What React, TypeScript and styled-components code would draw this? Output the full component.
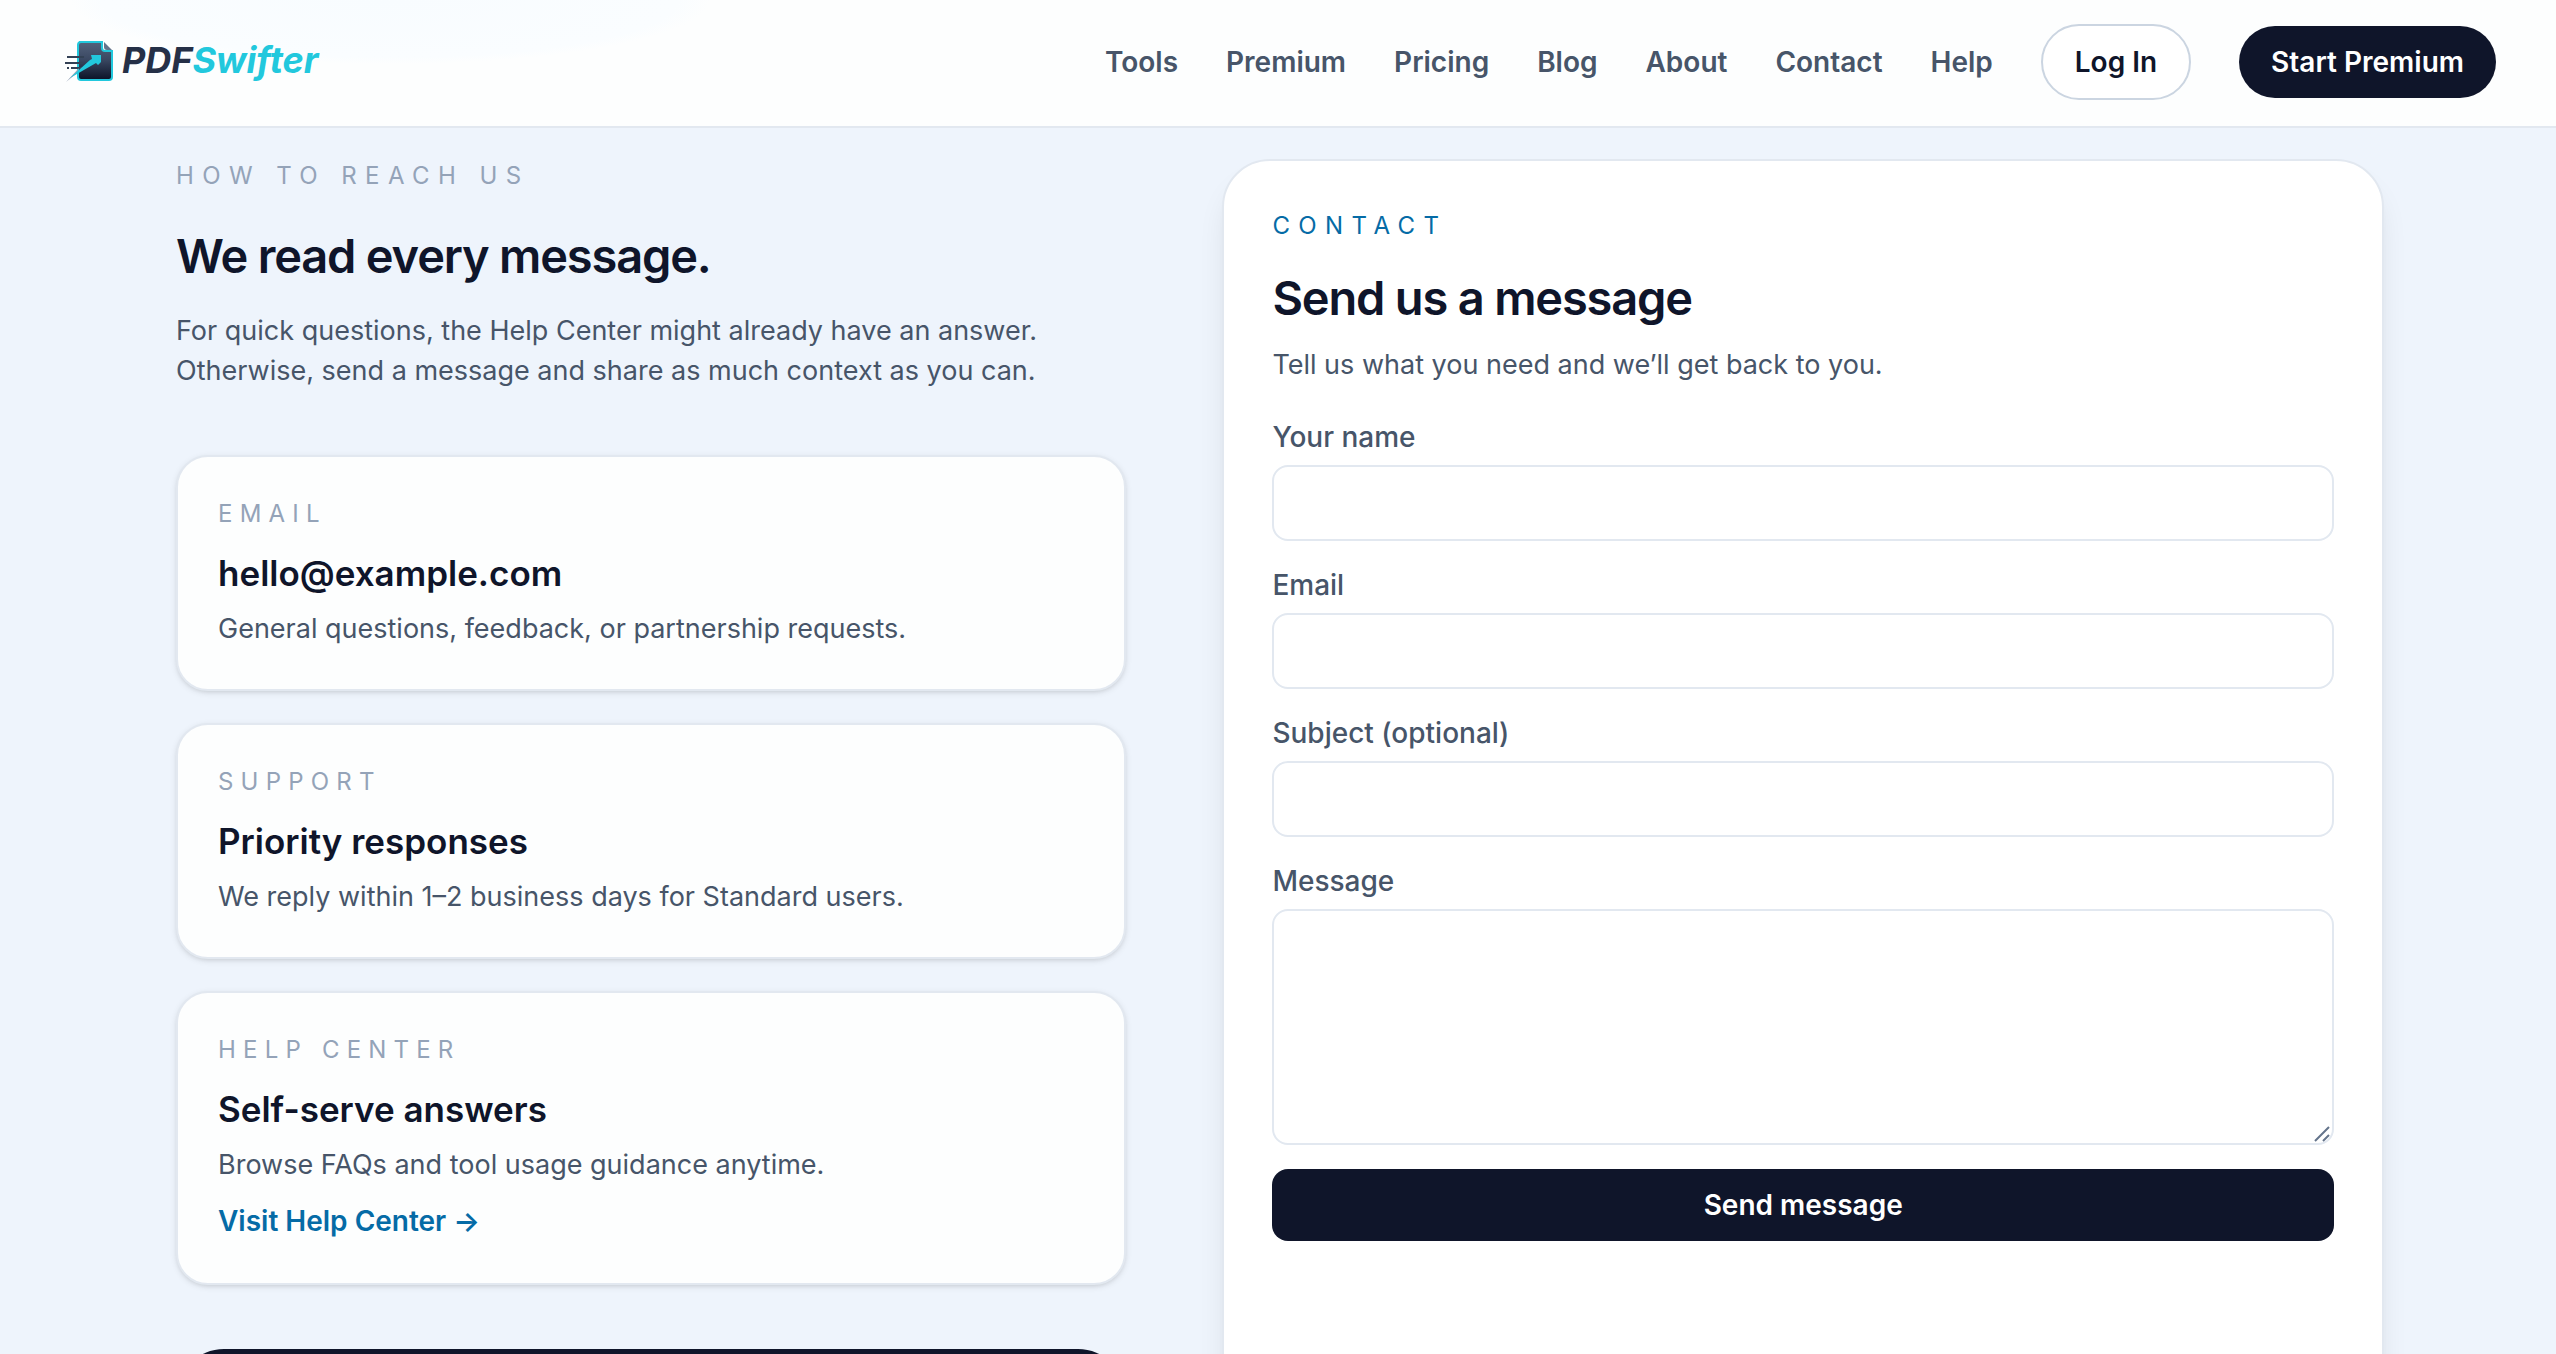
import React from "react";
import styled, { createGlobalStyle } from "styled-components";

const ink = "#0f152a";
const slate = "#475569";
const mist = "#94a3b8";
const line = "#e2e8f0";
const sky = "#056ba6";

const GlobalStyle = createGlobalStyle`
  *, *::before, *::after { box-sizing: border-box; }
  body {
    margin: 0;
    background: #eef4fc;
    color: ${ink};
    font-family: Inter, "Liberation Sans", sans-serif;
    font-size: 28px;
    line-height: 40px;
    -webkit-font-smoothing: antialiased;
  }
  h1, h2, h3, p { margin: 0; }
  a { color: inherit; text-decoration: none; }
  button, input, textarea { font: inherit; color: inherit; }
`;

const Shell = styled.div`
  height: 100vh;
  overflow: hidden;
`;

const Header = styled.header`
  display: flex;
  align-items: center;
  justify-content: space-between;
  height: 128px;
  padding: 0 60px 2px 64px;
  background: radial-gradient(320px 64px at 390px 0, #f8fcff 0%, #fafdff 90%, #fdfefe 100%) #fdfefe;
  border-bottom: 2px solid ${line};
`;

const Brand = styled.a`
  display: flex;
  align-items: center;
  gap: 8px;
  padding-bottom: 4px;
  font-size: 36px;
  font-weight: 700;
  font-style: italic;
  color: #253047;
`;

const BrandAccent = styled.span`
  color: #22c8dd;
`;

const Nav = styled.nav`
  display: flex;
  align-items: center;
  gap: 48px;
  font-weight: 600;
  color: ${slate};
`;

const PillButton = styled.button<{ $solid?: boolean }>`
  padding: 16px 32px;
  border-radius: 38px;
  border: ${(p) => (p.$solid ? "0" : "2px solid #cbd5e1")};
  background: ${(p) => (p.$solid ? ink : "#ffffff")};
  color: ${(p) => (p.$solid ? "#ffffff" : ink)};
  font-weight: 600;
`;

const Main = styled.main`
  padding: 31px 0 0 4px;
`;

const Columns = styled.div`
  display: grid;
  grid-template-columns: 9fr 11fr;
  gap: 96px;
  max-width: 2304px;
  margin: 0 auto;
  padding: 0 48px;
`;

const Intro = styled.section`
  display: flex;
  flex-direction: column;
`;

const Kicker = styled.p<{ $tone?: string; $tracking?: string }>`
  padding-top: 2px;
  font-size: 24px;
  line-height: 30px;
  letter-spacing: ${(p) => p.$tracking ?? "0.35em"};
  text-transform: uppercase;
  color: ${(p) => p.$tone ?? mist};
`;

const Title = styled.h2<{ $gap: number }>`
  margin-top: ${(p) => p.$gap}px;
  padding-top: 2px;
  font-size: 47px;
  line-height: 62px;
  font-weight: 600;
  letter-spacing: -0.025em;
`;

const Lead = styled.p<{ $gap: number }>`
  margin-top: ${(p) => p.$gap}px;
  font-size: 27px;
  color: ${slate};
`;

const CardList = styled.div`
  display: flex;
  flex-direction: column;
  gap: 32px;
  margin-top: 64px;
`;

const InfoCard = styled.article`
  padding: 40px;
  border: 2px solid ${line};
  border-radius: 32px;
  background: #fdfefe;
  box-shadow: 0 2px 6px rgba(0, 0, 0, 0.1), 0 2px 4px -2px rgba(0, 0, 0, 0.1);
`;

const CardTitle = styled.h3`
  margin-top: 16px;
  font-size: 35px;
  line-height: 56px;
  font-weight: 600;
`;

const HelpLink = styled.a`
  display: block;
  margin-top: 14px;
  line-height: 44px;
  font-weight: 600;
  color: ${sky};
`;

const DarkPanel = styled.div`
  min-height: 320px;
  margin-top: 64px;
  border-radius: 48px;
  background: ${ink};
`;

const FormCard = styled.section`
  padding: 48px;
  border: 2px solid ${line};
  border-radius: 48px;
  background: #ffffff;
  box-shadow: 0 20px 30px -6px rgba(0, 0, 0, 0.1), 0 8px 12px -8px rgba(0, 0, 0, 0.1);
`;

const Form = styled.form`
  display: flex;
  flex-direction: column;
  gap: 24px;
  margin-top: 32px;
`;

const Field = styled.div`
  display: flex;
  flex-direction: column;
  gap: 8px;
`;

const Label = styled.label`
  font-weight: 500;
  color: ${slate};
`;

const Input = styled.input`
  width: 100%;
  height: 76px;
  padding: 16px 24px;
  border: 2px solid ${line};
  border-radius: 16px;
  background: #ffffff;
  outline: none;
`;

const AreaWrap = styled.div`
  position: relative;
  display: flex;
`;

const TextArea = styled.textarea`
  width: 100%;
  height: 236px;
  padding: 16px 24px;
  border: 2px solid ${line};
  border-radius: 16px;
  background: #ffffff;
  outline: none;
  resize: none;
`;

const Grip = styled.svg`
  position: absolute;
  right: 4px;
  bottom: 3px;
`;

const Submit = styled.button`
  height: 72px;
  border: 0;
  border-radius: 16px;
  background: ${ink};
  color: #ffffff;
  font-weight: 600;
`;

const links = ["Tools", "Premium", "Pricing", "Blog", "About", "Contact", "Help"];

function LogoMark() {
  return (
    <svg width="50" height="44" viewBox="0 0 50 44" aria-hidden="true">
      <defs>
        <linearGradient id="sheet" x1="0" y1="0" x2="0" y2="1">
          <stop offset="0" stopColor="#53627c" />
          <stop offset="0.45" stopColor="#3b4963" />
          <stop offset="1" stopColor="#0b1226" />
        </linearGradient>
      </defs>
      <path
        d="M15 4h23v6a3 3 0 0 0 3 3h7v26a3 3 0 0 1-3 3H17a3 3 0 0 1-3-3V7a3 3 0 0 1 3-3z"
        fill="url(#sheet)"
        stroke="#22c8dd"
        strokeWidth="2"
      />
      <path d="M40 4l8 8h-5a3 3 0 0 1-3-3z" fill="#64748b" />
      <path d="M3 19h17M1 25h18M3 30h2M7 30h11" stroke="#334155" strokeWidth="2" />
      <path d="M2 44L15 30l-2 5z" fill="#94a3b8" />
      <path d="M6 40L26 22l2-1-1-4 10 0 0 7-3 3-2-2z" fill="#22c8dd" />
    </svg>
  );
}

function InfoBlock(props: { kicker: string; title: React.ReactNode; text: string; children?: React.ReactNode }) {
  return (
    <InfoCard>
      <Kicker $tracking="0.3em">{props.kicker}</Kicker>
      <CardTitle>{props.title}</CardTitle>
      <Lead $gap={8}>{props.text}</Lead>
      {props.children}
    </InfoCard>
  );
}

function TextField(props: { id: string; label: string; type?: string }) {
  return (
    <Field>
      <Label htmlFor={props.id}>{props.label}</Label>
      <Input id={props.id} name={props.id} type={props.type ?? "text"} />
    </Field>
  );
}

export default function App() {
  return (
    <Shell>
      <GlobalStyle />
      <Header>
        <Brand href="#">
          <LogoMark />
          <span>
            PDF<BrandAccent>Swifter</BrandAccent>
          </span>
        </Brand>
        <Nav>
          {links.map((name) => (
            <a key={name} href={`#${name.toLowerCase()}`}>
              {name}
            </a>
          ))}
          <PillButton type="button">Log In</PillButton>
          <PillButton type="button" $solid>
            Start Premium
          </PillButton>
        </Nav>
      </Header>
      <Main>
        <Columns>
          <Intro>
            <Kicker>How to reach us</Kicker>
            <Title $gap={32}>We read every message.</Title>
            <Lead $gap={24}>
              For quick questions, the Help Center might already have an answer.
              <br />
              Otherwise, send a message and share as much context as you can.
            </Lead>
            <CardList>
              <InfoBlock
                kicker="Email"
                title={<a href="mailto:hello@example.com">hello@example.com</a>}
                text="General questions, feedback, or partnership requests."
              />
              <InfoBlock
                kicker="Support"
                title="Priority responses"
                text="We reply within 1–2 business days for Standard users."
              />
              <InfoBlock
                kicker="Help Center"
                title="Self-serve answers"
                text="Browse FAQs and tool usage guidance anytime."
              >
                <HelpLink href="#help">Visit Help Center →</HelpLink>
              </InfoBlock>
            </CardList>
            <DarkPanel />
          </Intro>
          <FormCard>
            <Kicker $tone={sky}>Contact</Kicker>
            <Title $gap={24}>Send us a message</Title>
            <Lead $gap={16}>Tell us what you need and we’ll get back to you.</Lead>
            <Form onSubmit={(e) => e.preventDefault()}>
              <TextField id="name" label="Your name" />
              <TextField id="email" label="Email" type="email" />
              <TextField id="subject" label="Subject (optional)" />
              <Field>
                <Label htmlFor="message">Message</Label>
                <AreaWrap>
                  <TextArea id="message" name="message" />
                  <Grip width="16" height="16" viewBox="0 0 16 16" aria-hidden="true">
                    <path d="M1 15L15 1M9 15l6-6" stroke="#64748b" strokeWidth="2" />
                  </Grip>
                </AreaWrap>
              </Field>
              <Submit type="submit">Send message</Submit>
            </Form>
          </FormCard>
        </Columns>
      </Main>
    </Shell>
  );
}
